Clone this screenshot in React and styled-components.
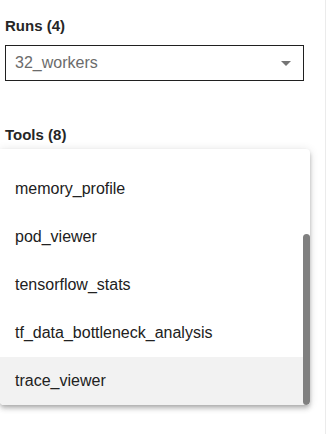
import styled, { createGlobalStyle } from "styled-components";

const GlobalStyle = createGlobalStyle`
  body {
    margin: 0;
    background: #fff;
    font-family: "Liberation Sans", Arial, sans-serif;
  }
`;

const Sidebar = styled.div`
  position: relative;
  width: 326px;
  height: 434px;
  box-sizing: border-box;
  border-right: 1px solid #ebebeb;
  padding: 17px 0 0 5px;
`;

const Section = styled.div`
  position: relative;
  margin-bottom: ${(props) => props.gap || 0}px;
`;

const Label = styled.div`
  font-size: 15px;
  font-weight: 700;
  line-height: 18px;
  color: #262626;
  margin-bottom: 10px;
`;

const SelectBox = styled.div`
  width: 299px;
  height: 36px;
  box-sizing: border-box;
  border: 1px solid #202020;
  display: flex;
  align-items: center;
  justify-content: space-between;
  padding: 0 12px 0 9px;
`;

const SelectValue = styled.span`
  font-size: 16px;
  color: #6b6b6b;
`;

const Arrow = styled.span`
  width: 0;
  height: 0;
  border-left: 5px solid transparent;
  border-right: 5px solid transparent;
  border-top: 5px solid #757575;
`;

const Panel = styled.div`
  position: absolute;
  left: -5px;
  top: 23px;
  width: 310px;
  height: 256px;
  background: #fff;
  border-radius: 0 4px 4px 4px;
  box-shadow: 0 2px 4px -1px rgba(0, 0, 0, 0.2), 0 4px 5px 0 rgba(0, 0, 0, 0.14),
    0 1px 10px 0 rgba(0, 0, 0, 0.12);
  overflow: hidden;
`;

// the bottom edge of the row scrolled out of view above
const ScrolledEdge = styled.div`
  height: 16px;
`;

const Option = styled.div`
  height: 48px;
  display: flex;
  align-items: center;
  padding-left: 15px;
  font-size: 16px;
  color: #212121;
  background: ${(props) => (props.active ? "#f2f2f2" : "#fff")};
`;

const Thumb = styled.div`
  position: absolute;
  right: 0;
  width: 7px;
  border-radius: 4px;
  background: #808080;
`;

const tools = [
  "overview_page",
  "input_pipeline_analyzer",
  "kernel_stats",
  "memory_profile",
  "pod_viewer",
  "tensorflow_stats",
  "tf_data_bottleneck_analysis",
  "trace_viewer",
];

export default function App() {
  const panelHeight = 256;
  const contentHeight = tools.length * 48;
  const thumbHeight = (panelHeight * panelHeight) / contentHeight;
  const visible = tools.slice(-5);

  return (
    <>
      <GlobalStyle />
      <Sidebar>
        <Section gap={45}>
          <Label>Runs (4)</Label>
          <SelectBox>
            <SelectValue>32_workers</SelectValue>
            <Arrow />
          </SelectBox>
        </Section>
        <Section>
          <Label>Tools ({tools.length})</Label>
          <Panel>
            <ScrolledEdge />
            {visible.map((tool) => (
              <Option key={tool} active={tool === "trace_viewer"}>
                {tool}
              </Option>
            ))}
            <Thumb style={{ top: panelHeight - thumbHeight, height: thumbHeight }} />
          </Panel>
        </Section>
      </Sidebar>
    </>
  );
}
